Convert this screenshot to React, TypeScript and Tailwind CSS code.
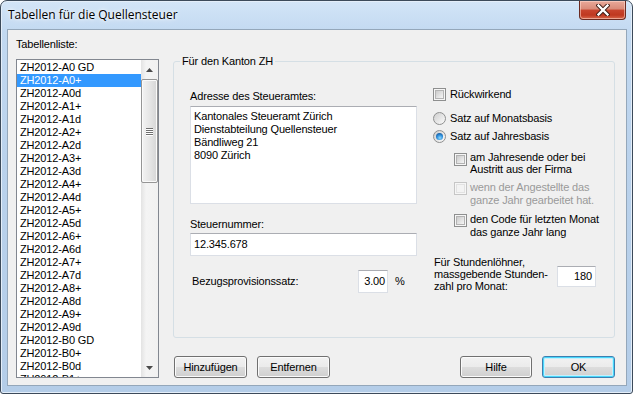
import React from 'react';

const tables: string[] = [
  'ZH2012-A0 GD', 'ZH2012-A0+', 'ZH2012-A0d', 'ZH2012-A1+', 'ZH2012-A1d',
  'ZH2012-A2+', 'ZH2012-A2d', 'ZH2012-A3+', 'ZH2012-A3d', 'ZH2012-A4+',
  'ZH2012-A4d', 'ZH2012-A5+', 'ZH2012-A5d', 'ZH2012-A6+', 'ZH2012-A6d',
  'ZH2012-A7+', 'ZH2012-A7d', 'ZH2012-A8+', 'ZH2012-A8d', 'ZH2012-A9+',
  'ZH2012-A9d', 'ZH2012-B0 GD', 'ZH2012-B0+', 'ZH2012-B0d', 'ZH2012-B1+',
];

const field = 'bg-white border border-[#dbdfe6] border-t-[#abadb3]';
const button =
  'h-[22px] rounded-[3px] border border-[#707070] bg-[linear-gradient(#f2f2f2_0%,#ebebeb_50%,#dddddd_50%,#cfcfcf_100%)] shadow-[inset_0_0_0_1px_#fbfbfb] flex items-center justify-center';

function Checkbox({ disabled }: { disabled?: boolean }) {
  return (
    <div
      className={`w-[13px] h-[13px] shrink-0 border p-[1px] bg-[#f6f6f6] ${
        disabled ? 'border-[#c6c6c6]' : 'border-[#8e8f8f]'
      }`}
    >
      <div
        className={`w-full h-full border ${
          disabled
            ? 'border-[#e2e2e2] bg-[#f3f3f3]'
            : 'border-[#b3b3b3] bg-gradient-to-br from-[#cbcbcb] to-[#f6f6f6]'
        }`}
      />
    </div>
  );
}

function Radio({ checked }: { checked?: boolean }) {
  return (
    <div className="w-[13px] h-[13px] shrink-0 rounded-full border border-[#8e8f8f] bg-gradient-to-br from-[#cfcfcf] to-[#fbfbfb] flex items-center justify-center">
      {checked && (
        <div className="w-[7px] h-[7px] rounded-full bg-[radial-gradient(circle_at_55%_70%,#8fdcff_0%,#2f8fdc_45%,#0c3f7c_100%)]" />
      )}
    </div>
  );
}

function Scrollbar() {
  return (
    <div className="w-[17px] h-full flex flex-col bg-[linear-gradient(90deg,#e3e3e3_0%,#f4f4f4_30%,#f1f1f1_100%)]">
      <div className="h-[19px] flex items-center justify-center">
        <svg width="7" height="4" viewBox="0 0 7 4">
          <path d="M0 4 L3.5 0 L7 4 Z" fill="#4a4a4a" />
        </svg>
      </div>
      <div className="h-[104px] rounded-[2px] border border-[#959595] bg-[linear-gradient(90deg,#f3f3f3_0%,#e6e6e6_50%,#d6d6d6_100%)] shadow-[inset_0_0_0_1px_#fafafa] flex items-center justify-center">
        <div className="flex flex-col gap-[1px]">
          {[0, 1, 2, 3].map((i) => (
            <div key={i} className="w-[7px] h-[1px] bg-[#6e6e6e] shadow-[0_1px_0_#ffffff]" />
          ))}
        </div>
      </div>
      <div className="flex-1" />
      <div className="h-[19px] flex items-center justify-center">
        <svg width="7" height="4" viewBox="0 0 7 4">
          <path d="M0 0 L7 0 L3.5 4 Z" fill="#4a4a4a" />
        </svg>
      </div>
    </div>
  );
}

export default function App() {
  return (
    <div className="w-[633px] h-[394px] bg-white">
      <div className="w-full h-full border border-[#3c4a5a] rounded-t-[7px] rounded-b-[3px] bg-[linear-gradient(180deg,#d3e5f7_0%,#c2d9f1_8%,#bad2ec_40%,#b4cde8_100%)] shadow-[inset_0_0_0_1px_#e4eef9] flex flex-col pl-[6px] pr-[5px] pb-[7px] font-['Liberation_Sans',Arial,sans-serif] text-[11px] tracking-[-0.15px] text-black">
        {/* Title bar */}
        <div className="h-[28px] flex items-start">
          <span className="mt-[6px] ml-[1px] leading-[16px] text-[12px] tracking-normal font-['Open_Sans',sans-serif] [text-shadow:0_0_6px_#ffffff,0_0_3px_#ffffff]">
            Tabellen für die Quellensteuer
          </span>
          <div className="ml-auto mr-[1px] w-[47px] h-[19px] rounded-b-[4px] border border-t-0 border-[#6b2a20] bg-[linear-gradient(#e9a99a_0%,#d98a78_45%,#c8452e_50%,#bf3820_78%,#d8684c_100%)] shadow-[inset_0_0_0_1px_rgba(255,220,210,0.55)] flex items-center justify-center">
            <svg width="14" height="12" viewBox="0 0 14 12">
              <path
                d="M2.5 1.5 L11.5 10.5 M11.5 1.5 L2.5 10.5"
                stroke="#3b1a14"
                strokeWidth="4.2"
                strokeLinecap="square"
              />
              <path
                d="M2.5 1.5 L11.5 10.5 M11.5 1.5 L2.5 10.5"
                stroke="#ffffff"
                strokeWidth="2.4"
                strokeLinecap="square"
              />
            </svg>
          </div>
        </div>

        {/* Client area */}
        <div className="w-[620px] h-[357px] border border-[#94a7ba] bg-[#f0f0f0] flex pl-[8px] pt-[8px]">
          {/* Table list */}
          <div className="w-[143px] flex flex-col">
            <span className="leading-[13px]">Tabellenliste:</span>
            <div className="mt-[8px] h-[319px] border border-[#828790] bg-white flex">
              <div className="flex-1 pt-[1px] overflow-hidden">
                {tables.map((t, i) => (
                  <div
                    key={t}
                    className={`h-[13px] leading-[13px] pl-[3px] whitespace-nowrap ${
                      i === 1 ? 'bg-[#3399ff] text-white' : ''
                    }`}
                  >
                    {t}
                  </div>
                ))}
              </div>
              <Scrollbar />
            </div>
          </div>

          {/* Right part */}
          <div className="ml-[14px] w-[442px] flex flex-col">
            <div className="mt-[23px] h-[277px] relative border border-[#d5dfe5] rounded-[3px] flex pl-[16px]">
              <span className="absolute left-[6px] -top-[7px] px-[2px] leading-[13px] bg-[#f0f0f0]">
                Für den Kanton ZH
              </span>

              {/* Left fields */}
              <div className="w-[227px] flex flex-col">
                <span className="mt-[28px] leading-[13px]">Adresse des Steueramtes:</span>
                <div className={`mt-[3px] h-[98px] pl-[3px] pt-[3px] leading-[13px] ${field}`}>
                  <div>Kantonales Steueramt Zürich</div>
                  <div>Dienstabteilung Quellensteuer</div>
                  <div>Bändliweg 21</div>
                  <div>8090 Zürich</div>
                </div>
                <span className="mt-[14px] leading-[13px]">Steuernummer:</span>
                <div className={`mt-[2px] h-[23px] pl-[3px] flex items-center ${field}`}>12.345.678</div>
                <div className="mt-[14px] h-[23px] flex items-center">
                  <span className="w-[168px] pl-[2px]">Bezugsprovisionssatz:</span>
                  <div className={`w-[30px] h-[23px] pr-[2px] flex items-center justify-end ${field}`}>3.00</div>
                  <span className="ml-[7px]">%</span>
                </div>
              </div>

              {/* Right options */}
              <div className="ml-[16px] flex-1 flex flex-col">
                <div className="mt-[26px] flex items-center gap-[4px] leading-[13px]">
                  <Checkbox />
                  <span>Rückwirkend</span>
                </div>
                <div className="mt-[11px] flex items-center gap-[4px] leading-[13px]">
                  <Radio />
                  <span>Satz auf Monatsbasis</span>
                </div>
                <div className="mt-[5px] flex items-center gap-[4px] leading-[13px]">
                  <Radio checked />
                  <span>Satz auf Jahresbasis</span>
                </div>
                <div className="mt-[8px] pl-[21px] flex items-start gap-[3px] leading-[12px]">
                  <div className="mt-[2px]">
                    <Checkbox />
                  </div>
                  <span>
                    am Jahresende oder bei
                    <br />
                    Austritt aus der Firma
                  </span>
                </div>
                <div className="mt-[6px] pl-[21px] flex items-start gap-[3px] leading-[13px] text-[#9a9a9a]">
                  <div className="mt-[1px]">
                    <Checkbox disabled />
                  </div>
                  <span>
                    wenn der Angestellte das
                    <br />
                    ganze Jahr gearbeitet hat.
                  </span>
                </div>
                <div className="mt-[6px] pl-[21px] flex items-start gap-[3px] leading-[13px]">
                  <div className="mt-[1px]">
                    <Checkbox />
                  </div>
                  <span>
                    den Code für letzten Monat
                    <br />
                    das ganze Jahr lang
                  </span>
                </div>
                <div className="mt-[17px] flex items-start">
                  <span className="w-[124px] pl-[1px] leading-[12px]">
                    Für Stundenlöhner,
                    <br />
                    massgebende Stunden-
                    <br />
                    zahl pro Monat:
                  </span>
                  <div className={`mt-[10px] w-[39px] h-[21px] pr-[3px] flex items-center justify-end ${field}`}>180</div>
                </div>
              </div>
            </div>

            {/* Buttons */}
            <div className="mt-[18px] flex items-center">
              <div className={`ml-[1px] w-[73px] ${button}`}>Hinzufügen</div>
              <div className={`ml-[10px] w-[73px] ${button}`}>Entfernen</div>
              <div className={`ml-auto w-[72px] ${button}`}>Hilfe</div>
              <div className="ml-[10px] w-[73px] h-[22px] rounded-[3px] border border-[#3c7fb1] bg-[linear-gradient(#f2f2f2_0%,#ebebeb_50%,#dddddd_50%,#cfcfcf_100%)] shadow-[inset_0_0_0_1px_#48d7fb,inset_0_0_0_2px_#c4f0fd] flex items-center justify-center">
                OK
              </div>
            </div>
          </div>
        </div>
      </div>
    </div>
  );
}
